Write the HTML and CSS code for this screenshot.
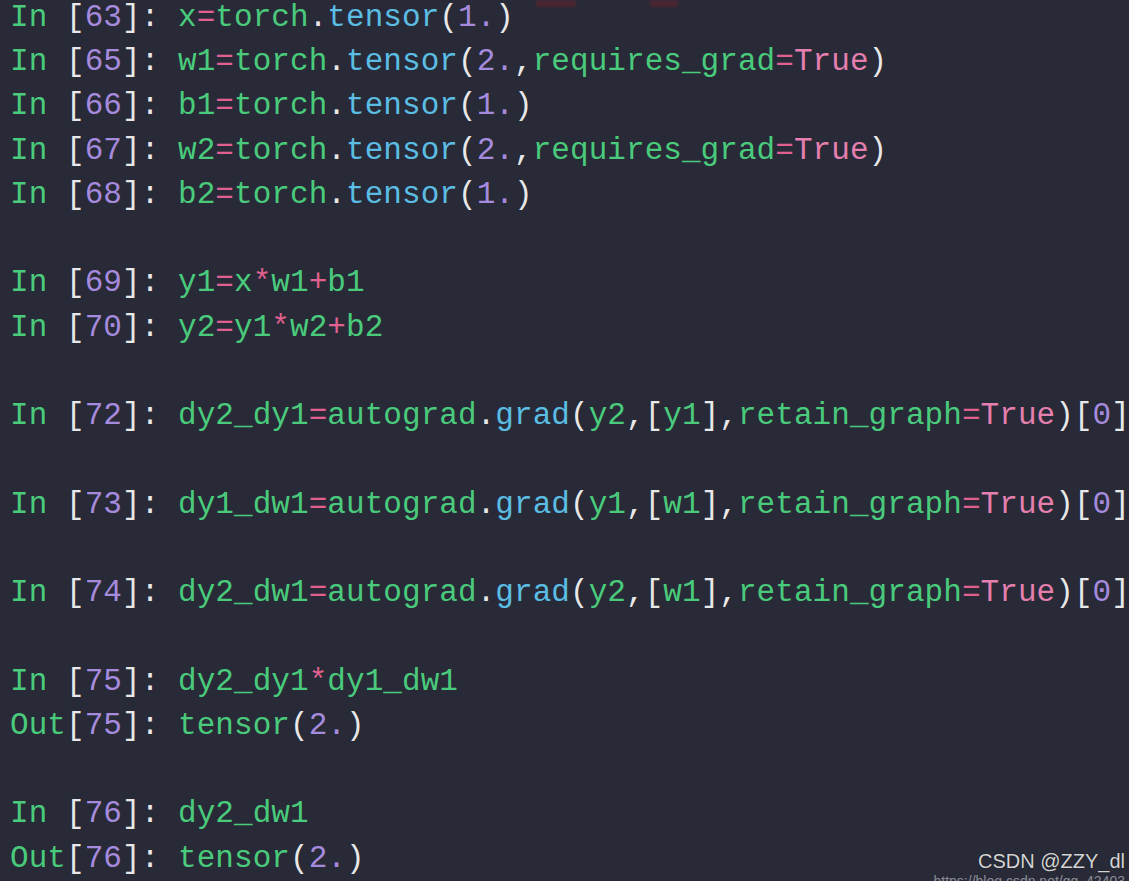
FILE: index.html
```html
<!DOCTYPE html>
<html>
<head>
<meta charset="utf-8">
<link rel="stylesheet" href="styles.css">
</head>
<body>
<div class="screen">
<div class="term">
<div class="ln"><span class="g">In </span><span class="w">[</span><span class="p">63</span><span class="w">]: </span><span class="g">x</span><span class="k">=</span><span class="g">torch</span><span class="w">.</span><span class="c">tensor</span><span class="w">(</span><span class="p">1.</span><span class="w">)</span></div>
<div class="ln"><span class="g">In </span><span class="w">[</span><span class="p">65</span><span class="w">]: </span><span class="g">w1</span><span class="k">=</span><span class="g">torch</span><span class="w">.</span><span class="c">tensor</span><span class="w">(</span><span class="p">2.</span><span class="w">,</span><span class="g">requires_grad</span><span class="k">=</span><span class="t">True</span><span class="w">)</span></div>
<div class="ln"><span class="g">In </span><span class="w">[</span><span class="p">66</span><span class="w">]: </span><span class="g">b1</span><span class="k">=</span><span class="g">torch</span><span class="w">.</span><span class="c">tensor</span><span class="w">(</span><span class="p">1.</span><span class="w">)</span></div>
<div class="ln"><span class="g">In </span><span class="w">[</span><span class="p">67</span><span class="w">]: </span><span class="g">w2</span><span class="k">=</span><span class="g">torch</span><span class="w">.</span><span class="c">tensor</span><span class="w">(</span><span class="p">2.</span><span class="w">,</span><span class="g">requires_grad</span><span class="k">=</span><span class="t">True</span><span class="w">)</span></div>
<div class="ln"><span class="g">In </span><span class="w">[</span><span class="p">68</span><span class="w">]: </span><span class="g">b2</span><span class="k">=</span><span class="g">torch</span><span class="w">.</span><span class="c">tensor</span><span class="w">(</span><span class="p">1.</span><span class="w">)</span></div>
<div class="ln"></div>
<div class="ln"><span class="g">In </span><span class="w">[</span><span class="p">69</span><span class="w">]: </span><span class="g">y1</span><span class="k">=</span><span class="g">x</span><span class="k">*</span><span class="g">w1</span><span class="k">+</span><span class="g">b1</span></div>
<div class="ln"><span class="g">In </span><span class="w">[</span><span class="p">70</span><span class="w">]: </span><span class="g">y2</span><span class="k">=</span><span class="g">y1</span><span class="k">*</span><span class="g">w2</span><span class="k">+</span><span class="g">b2</span></div>
<div class="ln"></div>
<div class="ln"><span class="g">In </span><span class="w">[</span><span class="p">72</span><span class="w">]: </span><span class="g">dy2_dy1</span><span class="k">=</span><span class="g">autograd</span><span class="w">.</span><span class="c">grad</span><span class="w">(</span><span class="g">y2</span><span class="w">,[</span><span class="g">y1</span><span class="w">],</span><span class="g">retain_graph</span><span class="k">=</span><span class="t">True</span><span class="w">)[</span><span class="p">0</span><span class="w">]</span></div>
<div class="ln"></div>
<div class="ln"><span class="g">In </span><span class="w">[</span><span class="p">73</span><span class="w">]: </span><span class="g">dy1_dw1</span><span class="k">=</span><span class="g">autograd</span><span class="w">.</span><span class="c">grad</span><span class="w">(</span><span class="g">y1</span><span class="w">,[</span><span class="g">w1</span><span class="w">],</span><span class="g">retain_graph</span><span class="k">=</span><span class="t">True</span><span class="w">)[</span><span class="p">0</span><span class="w">]</span></div>
<div class="ln"></div>
<div class="ln"><span class="g">In </span><span class="w">[</span><span class="p">74</span><span class="w">]: </span><span class="g">dy2_dw1</span><span class="k">=</span><span class="g">autograd</span><span class="w">.</span><span class="c">grad</span><span class="w">(</span><span class="g">y2</span><span class="w">,[</span><span class="g">w1</span><span class="w">],</span><span class="g">retain_graph</span><span class="k">=</span><span class="t">True</span><span class="w">)[</span><span class="p">0</span><span class="w">]</span></div>
<div class="ln"></div>
<div class="ln"><span class="g">In </span><span class="w">[</span><span class="p">75</span><span class="w">]: </span><span class="g">dy2_dy1</span><span class="k">*</span><span class="g">dy1_dw1</span></div>
<div class="ln"><span class="g">Out</span><span class="w">[</span><span class="p">75</span><span class="w">]: </span><span class="g">tensor</span><span class="w">(</span><span class="p">2.</span><span class="w">)</span></div>
<div class="ln"></div>
<div class="ln"><span class="g">In </span><span class="w">[</span><span class="p">76</span><span class="w">]: </span><span class="g">dy2_dw1</span></div>
<div class="ln"><span class="g">Out</span><span class="w">[</span><span class="p">76</span><span class="w">]: </span><span class="g">tensor</span><span class="w">(</span><span class="p">2.</span><span class="w">)</span></div>
</div>
<div class="blob blob-a"></div>
<div class="blob blob-b"></div>
<div class="watermark">
  <div class="wm-name">CSDN @ZZY_dl</div>
  <div class="wm-url">https://blog.csdn.net/qq_42403</div>
</div>
</div>
</body>
</html>
```
FILE: styles.css
```css
html, body {
  margin: 0;
  padding: 0;
  background: #282a37;
  overflow: hidden;
}
.screen {
  position: relative;
  width: 1129px;
  height: 881px;
  overflow: hidden;
  background: #282a37;
}
.term {
  display: flex;
  flex-direction: column;
  padding-left: 10px;
  font-family: "Liberation Mono", "DejaVu Sans Mono", monospace;
  font-size: 31px;
  letter-spacing: 0.06px;
  color: #e6e6e6;
}
.ln {
  box-sizing: border-box;
  flex: none;
  height: 44.25px;
  padding-top: 6px;
  line-height: 36px;
  white-space: pre;
}
.ln:first-child {
  height: 38px;
  padding-top: 0;
}
.g { color: #4acb7c; }
.w { color: #e8e8e8; }
.p { color: #a68ade; }
.k { color: #e0608f; }
.t { color: #e47fae; }
.c { color: #5bbde3; }
.blob {
  position: absolute;
  top: 0;
  height: 7px;
  background: #4a2633;
  filter: blur(1px);
}
.blob-a { left: 536px; width: 40px; }
.blob-b { left: 650px; width: 28px; }
.watermark {
  position: absolute;
  right: 4px;
  bottom: -8px;
  display: flex;
  flex-direction: column;
  align-items: flex-end;
  font-family: "Liberation Sans", Arial, sans-serif;
}
.wm-name {
  font-size: 20px;
  line-height: 24px;
  color: #d4d4d4;
  text-shadow: 0 0 1px rgba(0,0,0,0.6);
}
.wm-url {
  font-size: 14px;
  line-height: 16px;
  color: #8a8c96;
}
```
